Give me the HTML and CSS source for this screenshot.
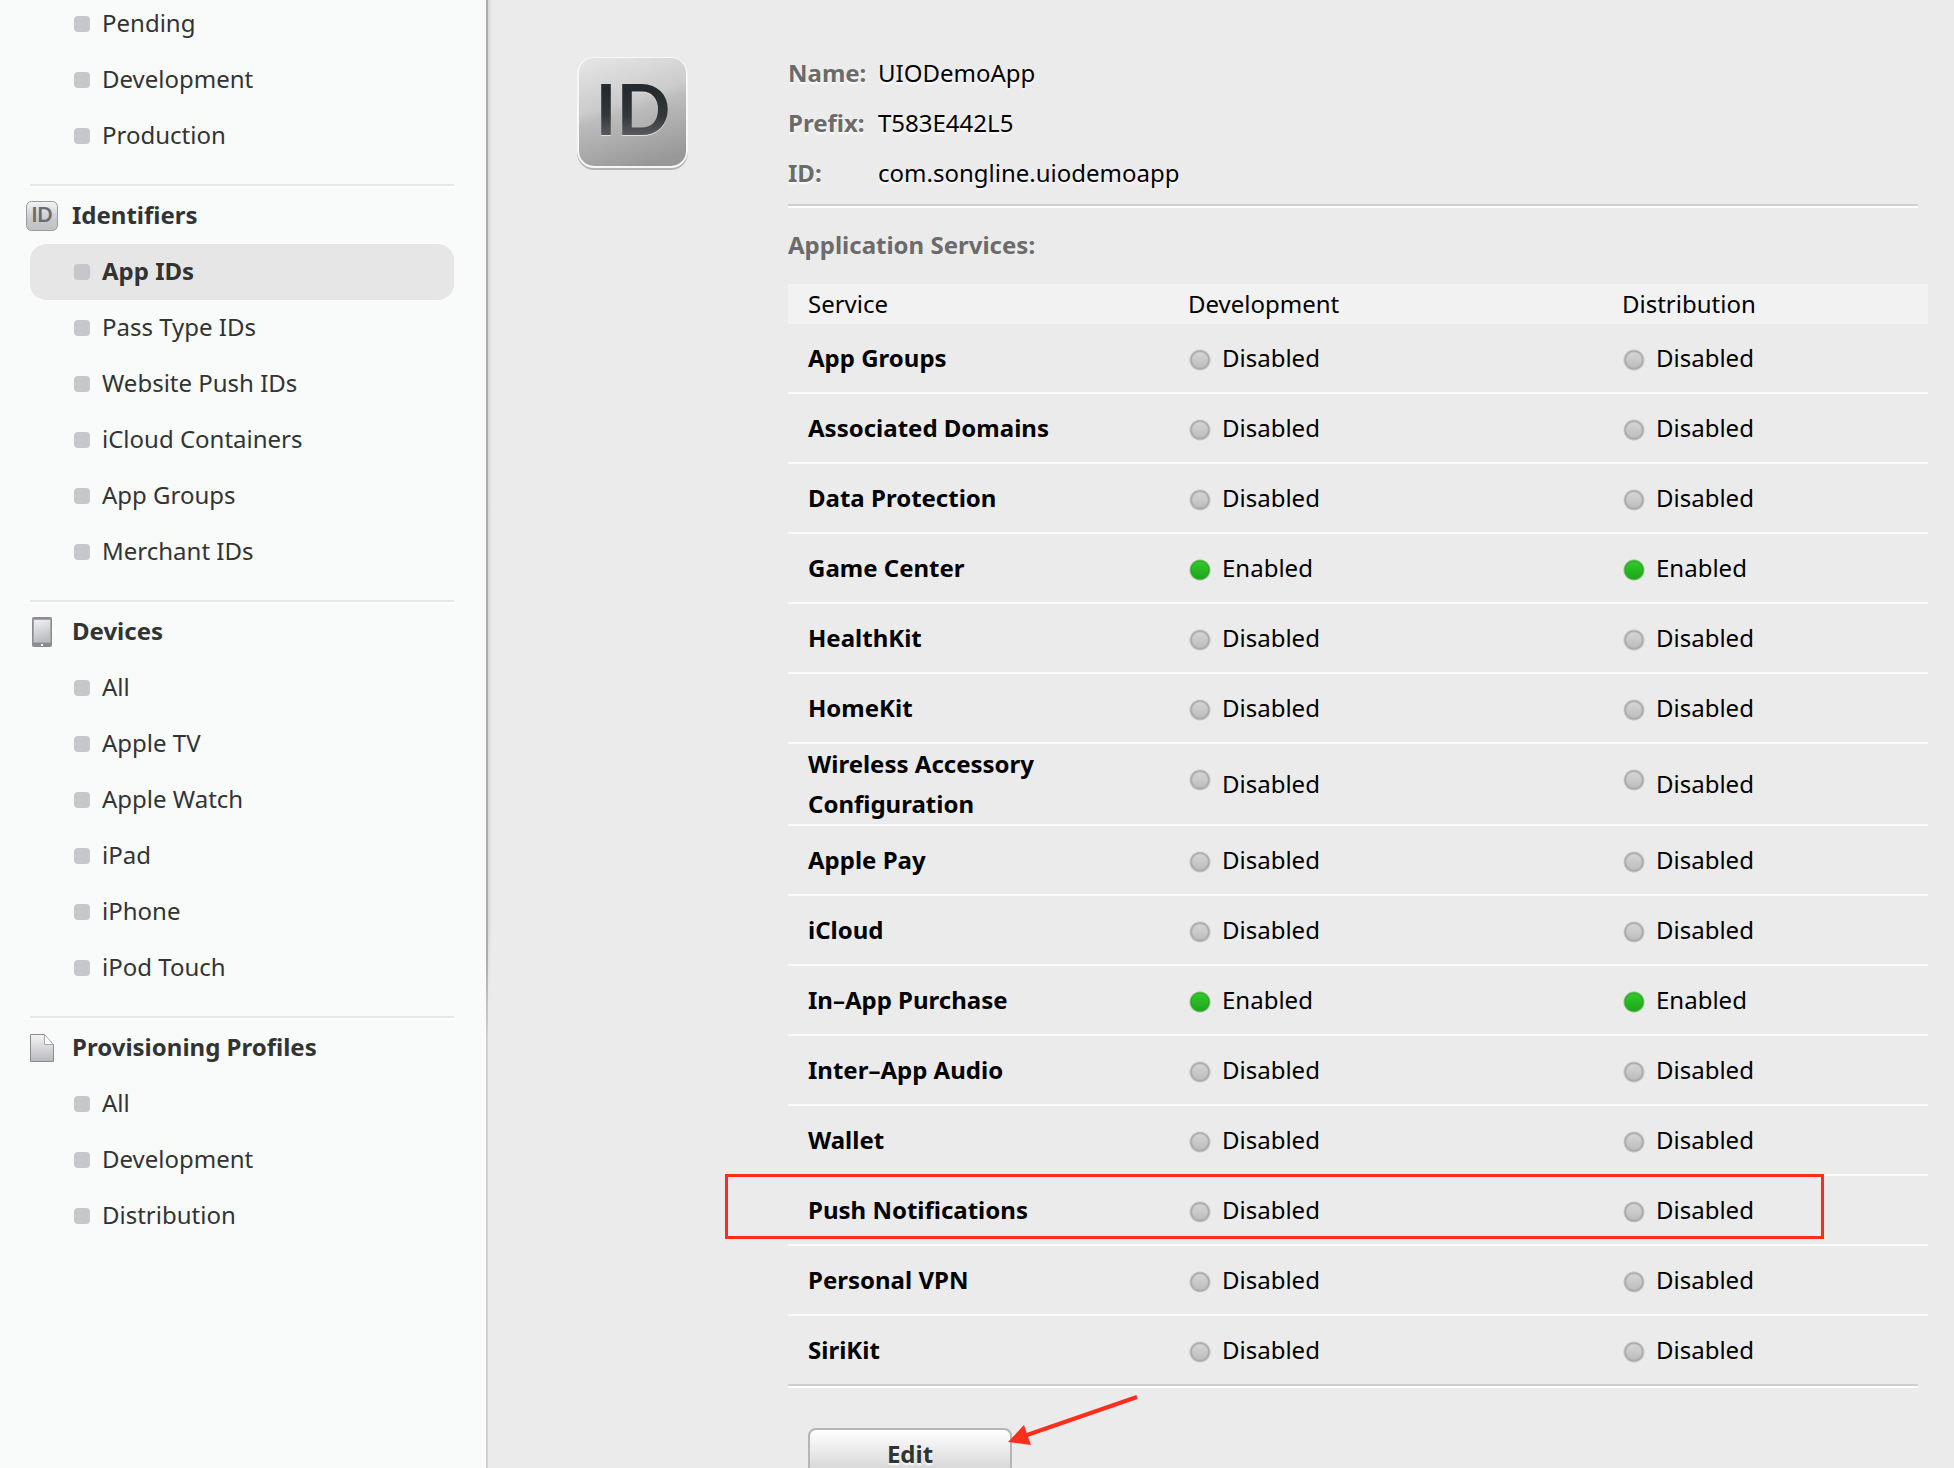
FILE: index.html
```html
<!DOCTYPE html>
<html lang="en">
<head>
<meta charset="utf-8">
<title>App IDs</title>
<link rel="stylesheet" href="styles.css">
</head>
<body>
<div class="shell">
  <nav class="sidebar" aria-label="Certificates, Identifiers and Profiles">
    <section class="group">
      <ul class="links">
        <li><a class="link" href="#">Pending</a></li>
        <li><a class="link" href="#">Development</a></li>
        <li><a class="link" href="#">Production</a></li>
      </ul>
    </section>
    <section class="group">
      <h2 class="group-title">
        <svg class="group-icon" width="36" height="32" viewBox="0 0 36 32" aria-hidden="true">
          <defs><linearGradient id="chip" x1="0" y1="0" x2="0" y2="1"><stop offset="0" stop-color="#f4f4f5"/><stop offset=".6" stop-color="#c9cacd"/><stop offset="1" stop-color="#bfc0c4"/></linearGradient></defs>
          <rect x="2.5" y="1.5" width="31" height="29" rx="5" fill="url(#chip)" stroke="#9b9b9f"/>
          <text x="18" y="22" text-anchor="middle" class="chip-text">ID</text>
        </svg>
        Identifiers
      </h2>
      <ul class="links">
        <li><a class="link current" href="#" aria-current="page">App IDs</a></li>
        <li><a class="link" href="#">Pass Type IDs</a></li>
        <li><a class="link" href="#">Website Push IDs</a></li>
        <li><a class="link" href="#">iCloud Containers</a></li>
        <li><a class="link" href="#">App Groups</a></li>
        <li><a class="link" href="#">Merchant IDs</a></li>
      </ul>
    </section>
    <section class="group">
      <h2 class="group-title">
        <svg class="group-icon" width="36" height="32" viewBox="0 0 36 32" aria-hidden="true">
          <defs><linearGradient id="glass" x1="0" y1="0" x2=".2" y2="1"><stop offset="0" stop-color="#f1f1f2"/><stop offset="1" stop-color="#bcbdc1"/></linearGradient></defs>
          <rect x="8" y="1" width="20" height="30" rx="2" fill="#8b8b90"/>
          <rect x="9.500" y="3.500" width="17" height="23" fill="url(#glass)" stroke="#a5a5aa"/>
          <rect x="17" y="28" width="2" height="2" fill="#fff"/>
        </svg>
        Devices
      </h2>
      <ul class="links">
        <li><a class="link" href="#">All</a></li>
        <li><a class="link" href="#">Apple TV</a></li>
        <li><a class="link" href="#">Apple Watch</a></li>
        <li><a class="link" href="#">iPad</a></li>
        <li><a class="link" href="#">iPhone</a></li>
        <li><a class="link" href="#">iPod Touch</a></li>
      </ul>
    </section>
    <section class="group">
      <h2 class="group-title">
        <svg class="group-icon" width="36" height="32" viewBox="0 0 36 32" aria-hidden="true">
          <defs><linearGradient id="paper" x1="0" y1="0" x2="0" y2="1"><stop offset="0" stop-color="#f5f5f6"/><stop offset="1" stop-color="#b9babe"/></linearGradient></defs>
          <path d="M6.500 2.500H20.500L29.500 12.500V29.500H6.500Z" fill="url(#paper)"/>
          <path d="M20.500 2.500H6.500V29.500H29.500V12.500" fill="none" stroke="#8b8b90"/>
          <path d="M20.500 2.500V12.500H29.500Z" fill="#fff" stroke="#a5a5aa"/>
        </svg>
        Provisioning Profiles
      </h2>
      <ul class="links">
        <li><a class="link" href="#">All</a></li>
        <li><a class="link" href="#">Development</a></li>
        <li><a class="link" href="#">Distribution</a></li>
      </ul>
    </section>
  </nav>

  <main class="detail">
    <svg class="app-icon" width="114" height="116" viewBox="0 0 114 116" aria-hidden="true">
      <defs>
        <linearGradient id="tile" x1=".3" y1="0" x2=".6" y2="1"><stop offset="0" stop-color="#e2e2e2"/><stop offset=".4" stop-color="#cbcbcb"/><stop offset=".5" stop-color="#bcbcbc"/><stop offset="1" stop-color="#989898"/></linearGradient>
        <linearGradient id="ink" x1="0" y1="0" x2="0" y2="1"><stop offset=".3" stop-color="#242a2d"/><stop offset=".6" stop-color="#33383b"/><stop offset=".85" stop-color="#5c5f62"/></linearGradient>
      </defs>
      <rect x="1" y="4" width="111" height="111" rx="17" fill="#b4b4b4"/>
      <rect x="1" y="2" width="111" height="111" rx="17" fill="#f7f7f7"/>
      <rect x="3" y="3" width="107" height="108" rx="15" fill="url(#tile)"/>
      <text x="57" y="81" text-anchor="middle" class="tile-shine">ID</text>
      <text x="57" y="80" text-anchor="middle" class="tile-text">ID</text>
    </svg>

    <div class="info">
      <dl class="facts">
        <dt>Name:</dt><dd>UIODemoApp</dd>
        <dt>Prefix:</dt><dd>T583E442L5</dd>
        <dt>ID:</dt><dd>com.songline.uiodemoapp</dd>
      </dl>
      <h3 class="services-title">Application Services:</h3>
      <table class="services">
        <colgroup><col class="col-service"><col class="col-dev"><col></colgroup>
        <thead><tr><th scope="col">Service</th><th scope="col">Development</th><th scope="col">Distribution</th></tr></thead>
        <tbody>
          <tr><th scope="row">App Groups</th><td>Disabled</td><td>Disabled</td></tr>
          <tr><th scope="row">Associated Domains</th><td>Disabled</td><td>Disabled</td></tr>
          <tr><th scope="row">Data Protection</th><td>Disabled</td><td>Disabled</td></tr>
          <tr><th scope="row">Game Center</th><td class="on">Enabled</td><td class="on">Enabled</td></tr>
          <tr><th scope="row">HealthKit</th><td>Disabled</td><td>Disabled</td></tr>
          <tr><th scope="row">HomeKit</th><td>Disabled</td><td>Disabled</td></tr>
          <tr><th scope="row">Wireless Accessory Configuration</th><td>Disabled</td><td>Disabled</td></tr>
          <tr><th scope="row">Apple Pay</th><td>Disabled</td><td>Disabled</td></tr>
          <tr><th scope="row">iCloud</th><td>Disabled</td><td>Disabled</td></tr>
          <tr><th scope="row">In–App Purchase</th><td class="on">Enabled</td><td class="on">Enabled</td></tr>
          <tr><th scope="row">Inter–App Audio</th><td>Disabled</td><td>Disabled</td></tr>
          <tr><th scope="row">Wallet</th><td>Disabled</td><td>Disabled</td></tr>
          <tr class="marked"><th scope="row">Push Notifications<span class="marker"></span></th><td>Disabled</td><td>Disabled</td></tr>
          <tr><th scope="row">Personal VPN</th><td>Disabled</td><td>Disabled</td></tr>
          <tr><th scope="row">SiriKit</th><td>Disabled</td><td>Disabled</td></tr>
        </tbody>
      </table>
      <div class="actions">
        <button class="edit" type="button">Edit</button>
        <svg class="arrow" width="132" height="54" viewBox="0 0 132 54" aria-hidden="true">
          <path d="M130 3L20 41" stroke="#ff2d1c" stroke-width="4"/>
          <path d="M1 48L17 31L24 51Z" fill="#ff2d1c"/>
        </svg>
      </div>
    </div>
  </main>
</div>
</body>
</html>
```
FILE: styles.css
```css
* {
  box-sizing: border-box;
}

body {
  margin: 0;
  background: #ebebeb;
  color: #000;
  font: 24px/40px "Noto Sans", "Open Sans", sans-serif;
}

.shell {
  display: flex;
  height: 100vh;
  overflow: hidden;
}

h2,
h3,
ul,
dl,
dd {
  margin: 0;
  padding: 0;
}

/* Sidebar */

.sidebar {
  flex: none;
  width: 492px;
  padding: 0 38px 0 30px;
  background:
    linear-gradient(to bottom, transparent 920px, #ebebeb 1000px) right / 4px 100% no-repeat,
    linear-gradient(to right, #d4d4d4, #ebebeb) right / 4px 100% no-repeat,
    linear-gradient(to bottom, #adadad 960px, #d2d2d2 1040px) right 4px top / 2px 100% no-repeat,
    #f9fbfa;
}

.group {
  padding-bottom: 20px;
}

.group:first-child {
  margin-top: -4px;
}

.group + .group {
  border-top: 2px solid #e5e8e7;
  box-shadow: inset 0 2px #fff;
  padding-top: 2px;
}

.group-title {
  display: flex;
  align-items: center;
  gap: 12px;
  height: 56px;
  margin-left: -6px;
  padding-bottom: 2px;
  color: #323333;
  font-size: 24px;
  font-weight: 700;
}

.group-icon {
  flex: none;
  margin-top: 2px;
}

.chip-text {
  font: 700 20px Lato, sans-serif;
  fill: #6b6b6e;
}

.links {
  list-style: none;
}

.link {
  display: flex;
  align-items: center;
  gap: 12px;
  height: 56px;
  padding: 0 0 2px 44px;
  border-radius: 16px;
  color: #323333;
  text-decoration: none;
}

.link::before {
  content: "";
  width: 16px;
  height: 16px;
  margin-top: 2px;
  border-radius: 4px;
  background: #c6c7cb;
}

.link.current {
  background: #e6e6e6;
  font-weight: 700;
}

/* App ID details */

.detail {
  flex: 1;
  display: flex;
  align-items: flex-start;
  min-width: 0;
  padding: 53px 26px 0 84px;
}

.app-icon {
  flex: none;
  margin: 2px 98px 0 0;
}

.tile-text,
.tile-shine {
  font: 700 71px Lato, sans-serif;
}

.tile-text {
  fill: url(#ink);
}

.tile-shine {
  fill: #e0e0e0;
}

.info {
  flex: 1;
  min-width: 0;
}

.facts {
  display: grid;
  grid-template-columns: 90px 1fr;
  row-gap: 10px;
  margin-right: 10px;
  padding-bottom: 11px;
  border-bottom: 2px solid #cfcfcf;
  box-shadow: 0 2px #fff;
  text-shadow: 0 2px 2px #fff;
}

.facts dt,
.services-title {
  color: #6b6b6b;
  font-size: 24px;
  font-weight: 700;
}

.services-title {
  padding: 19px 0;
}

.services {
  width: 100%;
  table-layout: fixed;
  border-spacing: 0;
}

.col-service {
  width: 400px;
}

.col-dev {
  width: 434px;
}

.services th,
.services td {
  padding: 0;
  text-align: left;
}

.services th:first-child {
  padding: 0 20px;
}

.services thead th {
  background: #f2f2f2;
  font-weight: 400;
}

.services tbody th,
.services tbody td {
  height: 70px;
  border-bottom: 2px solid #fafafa;
}

.services tbody td {
  padding-left: 34px;
  background:
    radial-gradient(circle, transparent 7px, #a6a6a6 9px, #ebebeb 11px) 1px 25px / 22px 22px no-repeat,
    linear-gradient(#dadada, #b8b8b8) 1px 25px / 22px 22px no-repeat;
}

.services tbody td.on {
  background:
    radial-gradient(circle, transparent 8px, #23a51f 9px, #ebebeb 11px) 1px 25px / 22px 22px no-repeat,
    linear-gradient(#35cf2c, #1da01a) 1px 25px / 22px 22px no-repeat;
}

.services tbody tr:last-child > * {
  height: 68px;
  border-bottom: 0;
}

.marked {
  position: relative;
}

.marker {
  position: absolute;
  top: -2px;
  right: 104px;
  left: -63px;
  height: 65px;
  border: 3px solid #ff2d1c;
}

.actions {
  position: relative;
  margin-right: 10px;
  padding: 42px 20px 40px;
  border-top: 2px solid #cfcfcf;
  box-shadow: inset 0 2px #fff;
}

.edit {
  width: 204px;
  height: 52px;
  border: 2px solid #b5b5b5;
  border-radius: 8px;
  background: linear-gradient(#fff, #cfcfcf);
  color: #323333;
  font: 700 24px/40px "Noto Sans", sans-serif;
  text-shadow: 0 2px 2px #fff;
}

.arrow {
  position: absolute;
  top: 8px;
  left: 219px;
}
```
